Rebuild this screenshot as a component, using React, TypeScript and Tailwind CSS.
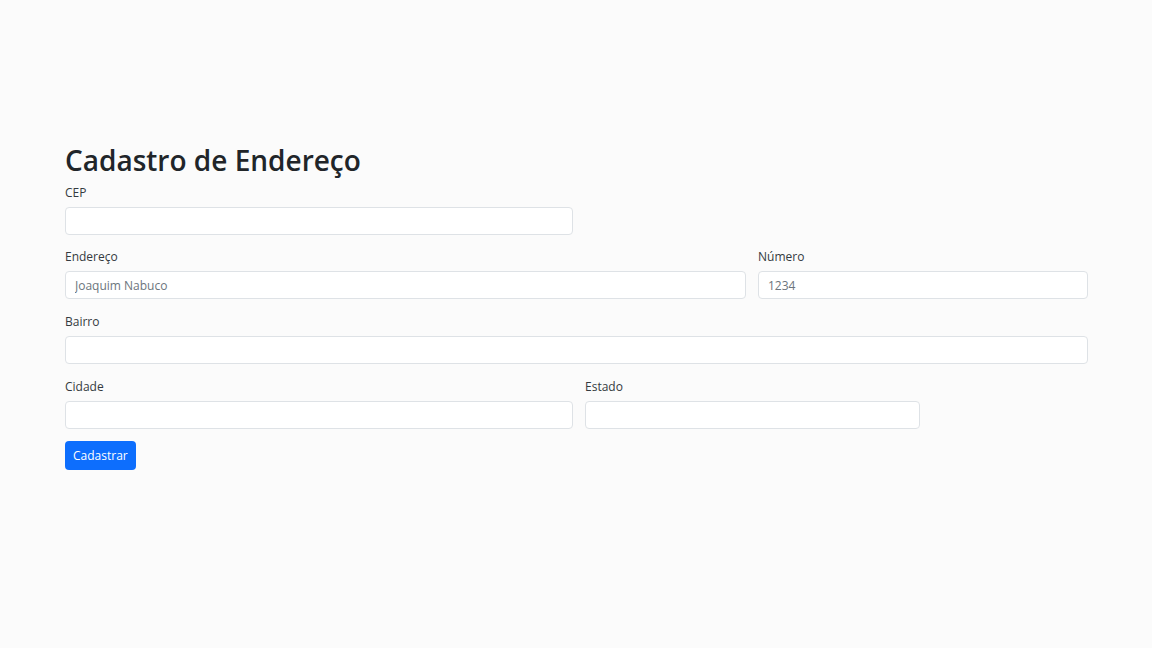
import React from "react";

const font = { fontFamily: '"Open Sans", "Noto Sans", sans-serif' };

function Field({ label, placeholder, className }: { label: string; placeholder?: string; className?: string }) {
  return (
    <div className={className}>
      <label className="block text-[12px] leading-[20px] text-[#343a40] mb-[4px]">{label}</label>
      <input
        placeholder={placeholder}
        className="block w-full h-[28px] px-[9px] bg-white border border-[#dee2e6] rounded-[4px] text-[12px] text-[#212529] placeholder:text-[#6c757d] outline-none"
      />
    </div>
  );
}

export default function App() {
  return (
    <div className="min-h-screen w-full bg-[#fbfbfb]" style={font}>
      <div className="pl-[65px] pt-[140px] w-[1088px]">
        <h1 className="text-[28px] leading-[40px] font-semibold text-[#212529] mb-[3px]">Cadastro de Endereço</h1>
        <Field label="CEP" className="w-[508px]" />
        <div className="flex gap-[12px] mt-[12px]">
          <Field label="Endereço" placeholder="Joaquim Nabuco" className="w-[681px]" />
          <Field label="Número" placeholder="1234" className="flex-1" />
        </div>
        <Field label="Bairro" className="mt-[13px]" />
        <div className="flex gap-[12px] mt-[13px]">
          <Field label="Cidade" className="w-[508px]" />
          <Field label="Estado" className="w-[335px]" />
        </div>
        <button className="mt-[12px] h-[29px] px-[8px] rounded-[4px] bg-[#0d6efd] text-white text-[12px]">Cadastrar</button>
      </div>
    </div>
  );
}
